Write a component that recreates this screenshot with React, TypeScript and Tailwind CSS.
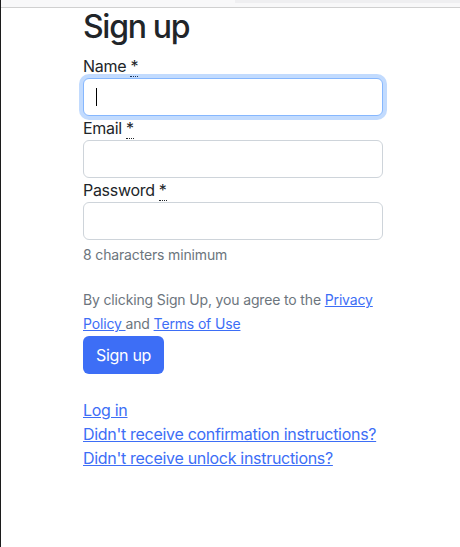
import React from 'react';

const font = { fontFamily: 'Inter, "Liberation Sans", Arial, sans-serif' };

function RequiredLabel({ text }: { text: string }) {
  return (
    <label className="block text-[16px] leading-6 text-[#212529] tracking-[-0.3px]">
      {text}{' '}
      <abbr title="required" className="no-underline border-b border-dotted border-[#212529] leading-none">
        *
      </abbr>
    </label>
  );
}

function Field({ label, type, focused }: { label: string; type: string; focused?: boolean }) {
  return (
    <div>
      <RequiredLabel text={label} />
      <div className="relative">
        <input
          type={type}
          readOnly
          className={
            focused
              ? 'block w-full h-[38px] rounded-[6px] border border-[#86b7fe] bg-white px-3 outline-none shadow-[0_0_0_4px_rgba(13,110,253,0.25)]'
              : 'block w-full h-[38px] rounded-[6px] border border-[#ced4da] bg-white px-3 outline-none'
          }
        />
        {focused && <span className="absolute left-[13px] top-[10px] h-[18px] w-px bg-black" />}
      </div>
    </div>
  );
}

export default function App() {
  return (
    <div className="min-h-screen bg-white border-l border-[#1c1c1c]" style={font}>
      <div className="h-2 flex border-b border-[#d0d0d0] bg-[#f8f8f9]">
        <div className="w-[234px]" />
        <div className="flex-1 h-[3px] bg-[#efeff1]" />
      </div>

      <div className="ml-[82px] w-[300px]">
        <h1 className="text-[32px] leading-[38px] font-medium text-[#212529] mb-2 tracking-[-1.3px]">Sign up</h1>

        <form className="flex flex-col">
          <Field label="Name" type="text" focused />
          <Field label="Email" type="email" />
          <Field label="Password" type="password" />
          <p className="mt-1 text-[14px] leading-[21px] text-[#6c757d] tracking-[-0.15px]">8 characters minimum</p>

          <p className="mt-[23px] text-[14px] leading-6 text-[#6c757d] tracking-[-0.15px]">
            By clicking Sign Up, you agree to the{' '}
            <a href="#" className="text-[#3d6ef6] underline">Privacy Policy&nbsp;</a>
            and{' '}
            <a href="#" className="text-[#3d6ef6] underline">Terms of Use</a>
          </p>

          <div>
            <button
              type="button"
              className="h-[38px] px-[13px] rounded-[6px] bg-[#3d6ef6] text-white text-[16px] leading-6 tracking-[-0.3px]"
            >
              Sign up
            </button>
          </div>
        </form>

        <div className="mt-6 flex flex-col items-start text-[16px] leading-6 tracking-[-0.3px]">
          <a href="#" className="text-[#3d6ef6] underline">Log in</a>
          <a href="#" className="text-[#3d6ef6] underline">Didn't receive confirmation instructions?</a>
          <a href="#" className="text-[#3d6ef6] underline">Didn't receive unlock instructions?</a>
        </div>
      </div>
    </div>
  );
}
